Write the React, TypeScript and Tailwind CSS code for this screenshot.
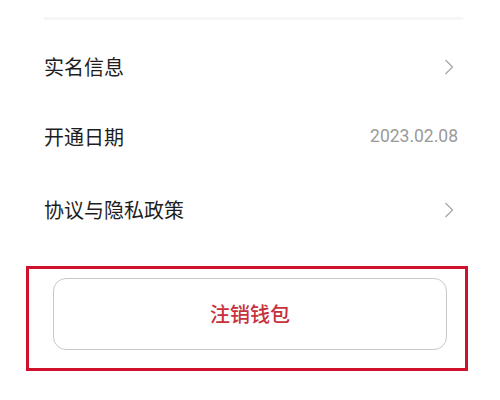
import React from 'react';

const Chevron = () => (
  <svg width="10" height="16" viewBox="0 0 10 16" fill="none" className="mr-[2px]">
    <polyline points="1.5,1 8.5,8 1.5,15" stroke="#a8a8a8" strokeWidth="1.3" />
  </svg>
);

const Row = ({ label, right, h }: { label: string; right: React.ReactNode; h: string }) => (
  <div className={`flex items-center justify-between ${h}`}>
    <span className="text-[20px] leading-none text-[#1e1e1e]">{label}</span>
    {right}
  </div>
);

export default function App() {
  return (
    <div
      className="w-[500px] h-[400px] bg-white overflow-hidden"
      style={{ fontFamily: '"Noto Sans CJK SC", "Noto Sans", sans-serif' }}
    >
      <div className="pl-[44px] pr-[37px] pt-[17px]">
        <div className="h-[3px] bg-[#f6f6f6]" />
        <div className="pt-[12px] pr-[7px]">
          <Row label="实名信息" h="h-[70px]" right={<Chevron />} />
          <Row
            label="开通日期"
            h="h-[70px]"
            right={
              <span
                className="text-[17.5px] leading-none text-[#9a9a9a] -mr-[2px]"
                style={{ fontFamily: 'Roboto, "Noto Sans", sans-serif' }}
              >
                2023.02.08
              </span>
            }
          />
          <Row label="协议与隐私政策" h="h-[76px]" right={<Chevron />} />
        </div>
      </div>

      <div className="mt-[18px] ml-[26px] w-[442px] h-[105px] border-[3px] border-[#d0112b] pl-[24px] pt-[9px]">
        <div className="w-[394px] h-[72px] rounded-[13px] border border-[#c9c9c9] flex items-center justify-center">
          <span className="text-[20px] leading-none font-medium text-[#c8303b]">注销钱包</span>
        </div>
      </div>
    </div>
  );
}
